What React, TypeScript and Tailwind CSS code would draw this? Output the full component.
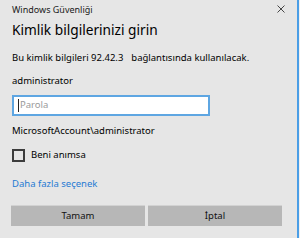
import React from 'react';

export default function App() {
  return (
    <div className="w-[300px] h-[238px] flex bg-[#f0f0f0] overflow-hidden" style={{ fontFamily: '"Noto Sans", "Liberation Sans", sans-serif' }}>
      <div className="w-[299px] h-full bg-[#e6e6e6] border-r-2 border-[#4a9ee6] flex flex-col pl-[12px] text-black">
        {/* Caption bar */}
        <div className="h-[17px] flex items-center justify-between pr-[12px]">
          <span className="text-[9px] leading-none text-[#1a1a1a] mt-[1px]">Windows Güvenliği</span>
          <svg width="8" height="8" viewBox="0 0 8 8" className="mt-[1px]">
            <path d="M0.5 0.5 L7.5 7.5 M7.5 0.5 L0.5 7.5" stroke="#333" strokeWidth="0.9" />
          </svg>
        </div>

        {/* Heading */}
        <h1 className="mt-[3px] text-[13.7px] leading-[20px] font-normal">Kimlik bilgilerinizi girin</h1>

        <p className="mt-[11px] text-[9.5px] leading-[14px] whitespace-nowrap">
          Bu kimlik bilgileri 92.42.3<span className="inline-block w-[8px]" />bağlantısında kullanılacak.
        </p>

        <p className="mt-[9px] text-[9.5px] leading-[14px]">administrator</p>

        <div className="mt-[7px] w-[198px] h-[21px] bg-white border-2 border-[#5ea6e2] flex items-center pl-[4px]">
          <span className="w-px h-[13px] bg-[#222]" />
          <span className="ml-[1px] text-[9.5px] text-[#9a9a9a]">Parola</span>
        </div>

        <p className="mt-[8px] text-[9.5px] leading-[14px]">MicrosoftAccount\administrator</p>

        <label className="mt-[10px] flex items-center gap-[6px]">
          <span className="w-[13px] h-[13px] border-2 border-[#3c3c3c] bg-transparent" />
          <span className="text-[9.5px] leading-[14px]">Beni anımsa</span>
        </label>

        <a className="mt-[15px] text-[9.5px] leading-[14px] text-[#1f7ad3]">Daha fazla seçenek</a>

        <div className="mt-[14px] flex gap-[3px] ml-[-1px]">
          <button className="w-[134px] h-[21px] bg-[#b7b7b7] border-t border-[#d2d2d2] text-[9.5px] text-[#111]">Tamam</button>
          <button className="w-[134px] h-[21px] bg-[#b7b7b7] border-t border-[#d2d2d2] text-[9.5px] text-[#111]">İptal</button>
        </div>
      </div>
    </div>
  );
}
